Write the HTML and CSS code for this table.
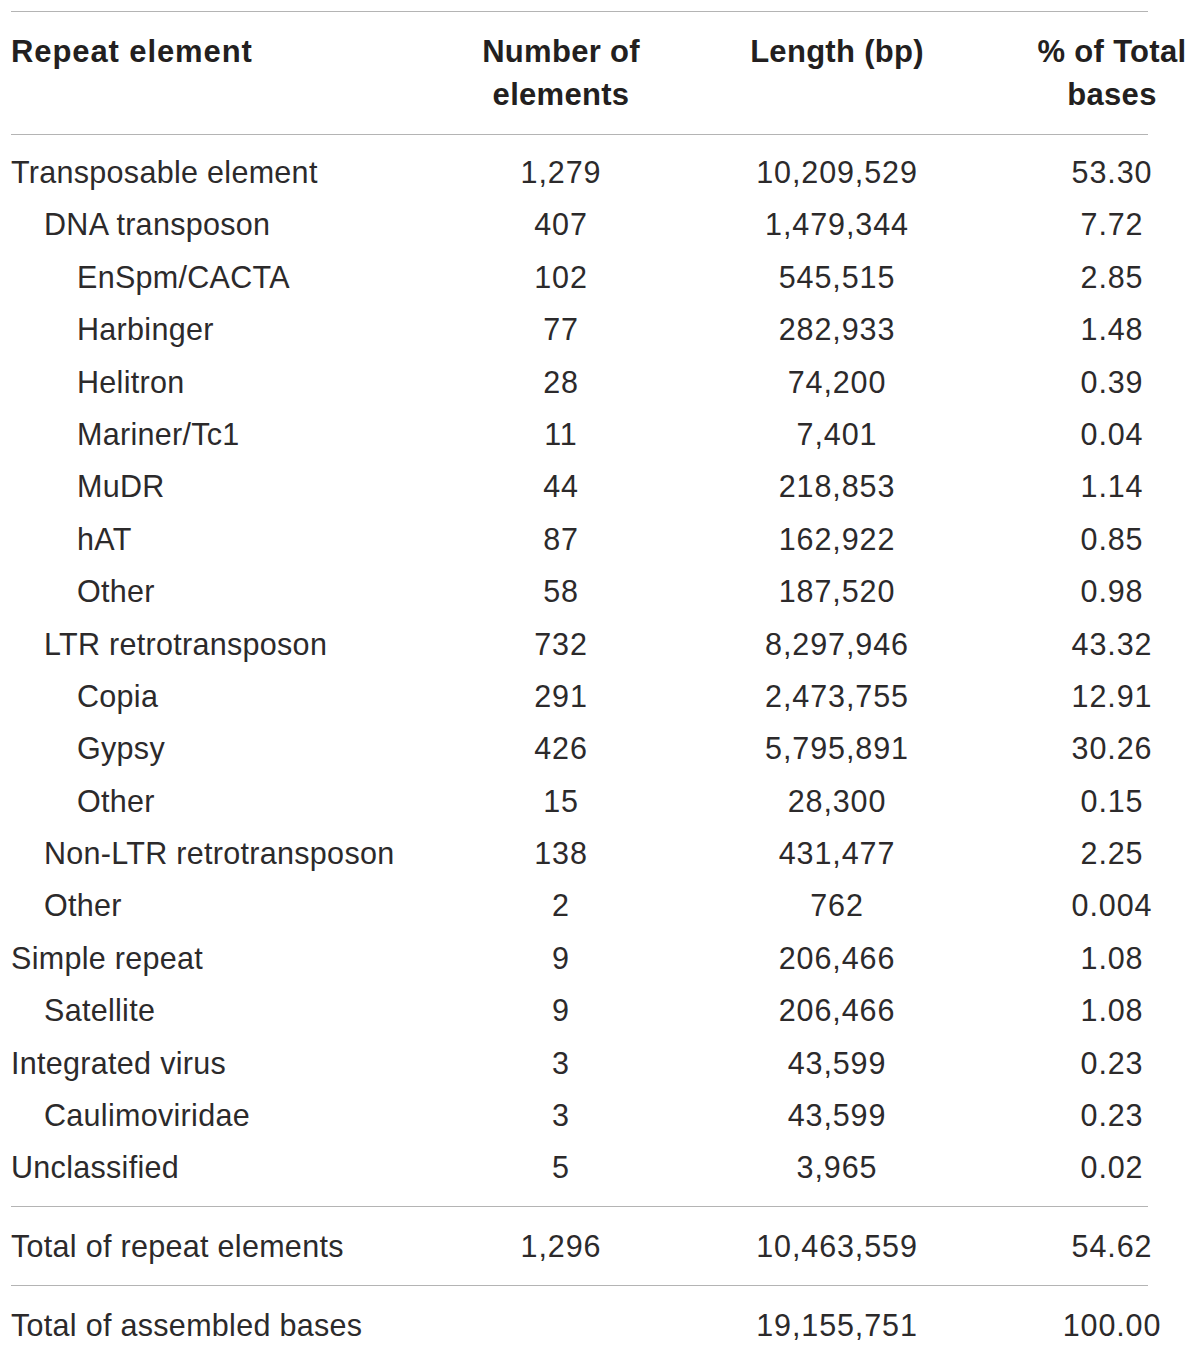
FILE: index.html
```html
<!DOCTYPE html>
<html lang="en">
<head>
<meta charset="utf-8">
<title>Repeat elements</title>
<link rel="stylesheet" href="styles.css">
</head>
<body>
<div class="table">
  <div class="row head">
    <div class="c1">Repeat element</div>
    <div class="cn">Number of<br>elements</div>
    <div class="cn">Length (bp)</div>
    <div class="cn">% of Total<br>bases</div>
  </div>
  <div class="body">
    <div class="row"><div class="c1">Transposable element</div><div class="cn">1,279</div><div class="cn">10,209,529</div><div class="cn">53.30</div></div>
    <div class="row"><div class="c1 l1">DNA transposon</div><div class="cn">407</div><div class="cn">1,479,344</div><div class="cn">7.72</div></div>
    <div class="row"><div class="c1 l2">EnSpm/CACTA</div><div class="cn">102</div><div class="cn">545,515</div><div class="cn">2.85</div></div>
    <div class="row"><div class="c1 l2">Harbinger</div><div class="cn">77</div><div class="cn">282,933</div><div class="cn">1.48</div></div>
    <div class="row"><div class="c1 l2">Helitron</div><div class="cn">28</div><div class="cn">74,200</div><div class="cn">0.39</div></div>
    <div class="row"><div class="c1 l2">Mariner/Tc1</div><div class="cn">11</div><div class="cn">7,401</div><div class="cn">0.04</div></div>
    <div class="row"><div class="c1 l2">MuDR</div><div class="cn">44</div><div class="cn">218,853</div><div class="cn">1.14</div></div>
    <div class="row"><div class="c1 l2">hAT</div><div class="cn">87</div><div class="cn">162,922</div><div class="cn">0.85</div></div>
    <div class="row"><div class="c1 l2">Other</div><div class="cn">58</div><div class="cn">187,520</div><div class="cn">0.98</div></div>
    <div class="row"><div class="c1 l1">LTR retrotransposon</div><div class="cn">732</div><div class="cn">8,297,946</div><div class="cn">43.32</div></div>
    <div class="row"><div class="c1 l2">Copia</div><div class="cn">291</div><div class="cn">2,473,755</div><div class="cn">12.91</div></div>
    <div class="row"><div class="c1 l2">Gypsy</div><div class="cn">426</div><div class="cn">5,795,891</div><div class="cn">30.26</div></div>
    <div class="row"><div class="c1 l2">Other</div><div class="cn">15</div><div class="cn">28,300</div><div class="cn">0.15</div></div>
    <div class="row"><div class="c1 l1">Non-LTR retrotransposon</div><div class="cn">138</div><div class="cn">431,477</div><div class="cn">2.25</div></div>
    <div class="row"><div class="c1 l1">Other</div><div class="cn">2</div><div class="cn">762</div><div class="cn">0.004</div></div>
    <div class="row"><div class="c1">Simple repeat</div><div class="cn">9</div><div class="cn">206,466</div><div class="cn">1.08</div></div>
    <div class="row"><div class="c1 l1">Satellite</div><div class="cn">9</div><div class="cn">206,466</div><div class="cn">1.08</div></div>
    <div class="row"><div class="c1">Integrated virus</div><div class="cn">3</div><div class="cn">43,599</div><div class="cn">0.23</div></div>
    <div class="row"><div class="c1 l1">Caulimoviridae</div><div class="cn">3</div><div class="cn">43,599</div><div class="cn">0.23</div></div>
    <div class="row"><div class="c1">Unclassified</div><div class="cn">5</div><div class="cn">3,965</div><div class="cn">0.02</div></div>
  </div>
  <div class="row total ruled"><div class="c1">Total of repeat elements</div><div class="cn">1,296</div><div class="cn">10,463,559</div><div class="cn">54.62</div></div>
  <div class="row total"><div class="c1">Total of assembled bases</div><div class="cn"></div><div class="cn">19,155,751</div><div class="cn">100.00</div></div>
</div>
</body>
</html>
```

FILE: styles.css
```css
html, body {
  margin: 0;
  padding: 0;
  background: #ffffff;
}

body {
  font-family: "Liberation Sans", Arial, Helvetica, sans-serif;
  color: #2c2a2b;
  font-size: 30.5px;
  overflow: hidden;
}

.table {
  width: 1137px;
  margin-left: 11px;
  padding-top: 11px;
}

.row {
  display: grid;
  grid-template-columns: 400px 300px 252px 226px;
  height: 52.4px;
  line-height: 52.4px;
  white-space: nowrap;
}

.c1 {
  letter-spacing: 0.3px;
}

.cn {
  text-align: center;
  letter-spacing: 0.9px;
}

.cn:last-child {
  padding-left: 72px;
}

.l1 {
  padding-left: 33px;
}

.l2 {
  padding-left: 66px;
}

.head {
  height: auto;
  font-weight: bold;
  font-size: 31px;
  line-height: 43px;
  padding: 18px 0;
  color: #231f20;
  border-top: 1px solid #b4b4b4;
  border-bottom: 1px solid #b4b4b4;
}

.head .c1 {
  letter-spacing: 0.9px;
}

.head .cn {
  letter-spacing: 0.3px;
}

.body {
  padding: 11px 0 12.5px;
  border-bottom: 1px solid #b4b4b4;
}

.total {
  height: 78px;
  line-height: 78px;
}

.ruled {
  border-bottom: 1px solid #b4b4b4;
}
```
